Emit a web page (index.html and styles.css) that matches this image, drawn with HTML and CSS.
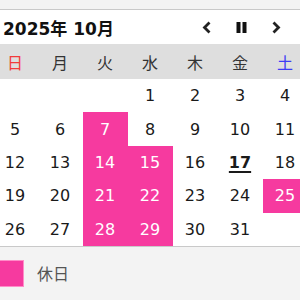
FILE: index.html
```html
<!DOCTYPE html>
<html lang="ja">
<head>
<meta charset="utf-8">
<link rel="stylesheet" href="styles.css">
</head>
<body>
<div class="cal">
  <div class="topstrip"></div>
  <header class="head">
    <div class="title">2025年 10月</div>
    <nav class="nav">
      <span class="btn"><svg width="10" height="13" viewBox="0 0 10 13"><path d="M7.5 1.5 L2.5 6.5 L7.5 11.5" fill="none" stroke="#222" stroke-width="2.8"/></svg></span>
      <span class="btn"><svg width="13" height="11" viewBox="0 0 13 11"><rect x="1.5" y="0" width="4" height="11" fill="#111"/><rect x="7.5" y="0" width="4" height="11" fill="#111"/></svg></span>
      <span class="btn"><svg width="10" height="13" viewBox="0 0 10 13"><path d="M2.5 1.5 L7.5 6.5 L2.5 11.5" fill="none" stroke="#222" stroke-width="2.8"/></svg></span>
    </nav>
  </header>
  <div class="grid weekdays">
    <div class="sun">日</div><div>月</div><div>火</div><div>水</div><div>木</div><div>金</div><div class="sat">土</div>
  </div>
  <div class="grid days">
    <div></div><div></div><div></div><div>1</div><div>2</div><div>3</div><div>4</div>
    <div>5</div><div>6</div><div class="hol">7</div><div>8</div><div>9</div><div>10</div><div>11</div>
    <div>12</div><div>13</div><div class="hol">14</div><div class="hol">15</div><div>16</div><div class="today">17</div><div>18</div>
    <div>19</div><div>20</div><div class="hol">21</div><div class="hol">22</div><div>23</div><div>24</div><div class="hol">25</div>
    <div>26</div><div>27</div><div class="hol">28</div><div class="hol">29</div><div>30</div><div>31</div><div></div>
  </div>
  <footer class="legend">
    <span class="swatch"></span><span class="label">休日</span>
  </footer>
</div>
</body>
</html>
```
FILE: styles.css
```css
html, body {
  margin: 0;
  padding: 0;
  width: 300px;
  height: 300px;
  overflow: hidden;
  background: #f3f3f3;
}
.cal {
  font-family: "DejaVu Sans", "Noto Sans CJK JP", sans-serif;
  color: #222;
  width: 300px;
  height: 300px;
  display: flex;
  flex-direction: column;
}
.topstrip {
  height: 9px;
  background: #f3f3f3;
  border-bottom: 1px solid #c9c9c9;
}
.head {
  height: 34px;
  background: #fff;
  display: flex;
  align-items: center;
  justify-content: space-between;
  padding-left: 3px;
  padding-right: 7px;
}
.title {
  font-weight: bold;
  font-size: 17px;
  color: #111;
}
.nav {
  display: flex;
  align-items: center;
  height: 100%;
}
.btn {
  width: 34.5px;
  display: flex;
  justify-content: center;
  align-items: center;
}
.grid {
  display: grid;
  grid-template-columns: repeat(7, 45px);
  width: 315px;
  margin-left: -7.5px;
}
.weekdays {
  height: 35px;
  background: #dedede;
  font-size: 16px;
  color: #333;
}
.weekdays div {
  display: flex;
  align-items: center;
  justify-content: center;
}
.weekdays .sun { color: #f23a3a; }
.weekdays .sat { color: #3d3df5; }
.days {
  background: #fff;
  grid-template-rows: repeat(5, 33.4px);
  font-size: 16px;
}
.days div {
  display: flex;
  align-items: center;
  justify-content: center;
  color: #1a1a1a;
}
.days .hol {
  background: #f63a9f;
  color: #fff;
}
.days .today {
  font-weight: bold;
  text-decoration: underline;
  text-underline-offset: 3px;
  text-decoration-thickness: 2px;
}
.legend {
  flex: 1;
  border-top: 1px solid #c9c9c9;
  background: #f3f3f3;
  display: flex;
  align-items: center;
  gap: 13px;
}
.swatch {
  width: 23px;
  height: 25px;
  background: #f63a9f;
  border: 1px solid #ff8cc8;
  border-left: 0;
}
.label {
  font-size: 16px;
  color: #555;
}
```
